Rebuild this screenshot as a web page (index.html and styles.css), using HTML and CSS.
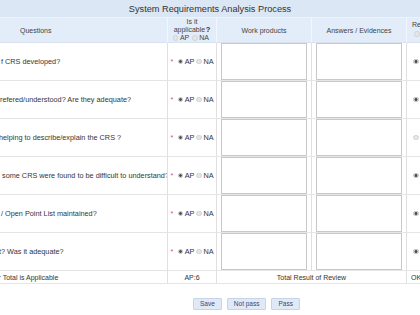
FILE: index.html
```html
<!DOCTYPE html>
<html lang="en">
<head>
<meta charset="utf-8">
<title>System Requirements Analysis Process</title>
<link rel="stylesheet" href="styles.css">
</head>
<body>
<div class="page">
  <div class="title">System Requirements Analysis Process</div>
  <div class="sheet">
    <div class="cell hd hd-q">Questions</div>
    <div class="cell hd hd-app">
      <span>Is it</span>
      <span>applicable<b class="help">?</b></span>
      <span class="opts"><input type="radio" name="all" class="radio"><span class="lbl">AP</span><input type="radio" name="all" class="radio"><span class="lbl">NA</span></span>
    </div>
    <div class="cell hd">Work products</div>
    <div class="cell hd">Answers / Evidences</div>
    <div class="cell hd hd-res"><span>Re</span><input type="radio" name="resall" class="radio"></div>

    <div class="cell q q1">f CRS developed?</div>
    <div class="cell app"><span class="req">*</span><input type="radio" name="a1" class="radio" checked><span class="lbl">AP</span><input type="radio" name="a1" class="radio"><span class="lbl">NA</span></div>
    <div class="cell box"><textarea></textarea></div>
    <div class="cell box"><textarea></textarea></div>
    <div class="cell res"><input type="radio" name="r1" class="radio" checked></div>

    <div class="cell q">refered/understood? Are they adequate?</div>
    <div class="cell app"><span class="req">*</span><input type="radio" name="a2" class="radio" checked><span class="lbl">AP</span><input type="radio" name="a2" class="radio"><span class="lbl">NA</span></div>
    <div class="cell box"><textarea></textarea></div>
    <div class="cell box"><textarea></textarea></div>
    <div class="cell res"><input type="radio" name="r2" class="radio" checked></div>

    <div class="cell q q3">helping to describe/explain the CRS ?</div>
    <div class="cell app"><span class="req">*</span><input type="radio" name="a3" class="radio" checked><span class="lbl">AP</span><input type="radio" name="a3" class="radio"><span class="lbl">NA</span></div>
    <div class="cell box"><textarea></textarea></div>
    <div class="cell box"><textarea></textarea></div>
    <div class="cell res"><input type="radio" name="r3" class="radio"></div>

    <div class="cell q q4">some CRS were found to be difficult to understand?</div>
    <div class="cell app"><span class="req">*</span><input type="radio" name="a4" class="radio" checked><span class="lbl">AP</span><input type="radio" name="a4" class="radio"><span class="lbl">NA</span></div>
    <div class="cell box"><textarea></textarea></div>
    <div class="cell box"><textarea></textarea></div>
    <div class="cell res"><input type="radio" name="r4" class="radio" checked></div>

    <div class="cell q q1">/ Open Point List maintained?</div>
    <div class="cell app"><span class="req">*</span><input type="radio" name="a5" class="radio" checked><span class="lbl">AP</span><input type="radio" name="a5" class="radio"><span class="lbl">NA</span></div>
    <div class="cell box"><textarea></textarea></div>
    <div class="cell box"><textarea></textarea></div>
    <div class="cell res"><input type="radio" name="r5" class="radio" checked></div>

    <div class="cell q q6">t? Was it adequate?</div>
    <div class="cell app"><span class="req">*</span><input type="radio" name="a6" class="radio" checked><span class="lbl">AP</span><input type="radio" name="a6" class="radio"><span class="lbl">NA</span></div>
    <div class="cell box"><textarea></textarea></div>
    <div class="cell box"><textarea></textarea></div>
    <div class="cell res"><input type="radio" name="r6" class="radio" checked></div>

    <div class="cell tot tot-q">r Total is Applicable</div>
    <div class="cell tot tot-c">AP:6</div>
    <div class="cell tot tot-c tot-span">Total Result of Review</div>
    <div class="cell tot tot-r">OK</div>
  </div>
  <div class="actions">
    <button class="btn">Save</button>
    <button class="btn">Not pass</button>
    <button class="btn">Pass</button>
  </div>
</div>
</body>
</html>
```

FILE: styles.css
```css
html, body {
  margin: 0;
  padding: 0;
  overflow: hidden;
  background: #fff;
}

body {
  width: 420px;
  height: 315px;
  font-family: "Liberation Sans", Arial, sans-serif;
  color: #333;
}

.page {
  width: 420px;
  overflow: hidden;
}

.title {
  height: 17px;
  line-height: 19px;
  font-size: 9.2px;
  text-align: center;
  background: #dbe7f5;
  border-bottom: 1px solid #eef3fa;
  color: #333;
  white-space: nowrap;
}

.sheet {
  display: grid;
  grid-template-columns: 168px 49px 95px 95px 60px;
  grid-template-rows: 25px repeat(6, 38px) 13px;
  width: 467px;
}

.cell {
  box-sizing: border-box;
  border-right: 1px solid #e0e0e0;
  border-bottom: 1px solid #e6e6e6;
  white-space: nowrap;
  overflow: hidden;
}

/* header */
.hd {
  background: #e2edf9;
  border-right-color: #f3f7fc;
  border-bottom-color: #d9e3ef;
  font-size: 7px;
  color: #444;
  display: flex;
  align-items: center;
  justify-content: center;
}

.hd-q {
  justify-content: flex-start;
  padding-left: 20px;
}

.hd-app {
  flex-direction: column;
  justify-content: flex-start;
  line-height: 8px;
}

.help {
  color: #1d2a44;
  font-weight: bold;
  font-size: 7.5px;
  margin-left: 0.5px;
}

.opts {
  display: flex;
  align-items: center;
  margin-left: 1px;
}

.hd-res {
  flex-direction: column;
  align-items: flex-start;
  justify-content: flex-start;
  padding: 3px 0 0 5px;
  line-height: 8px;
}

.hd-res .radio {
  margin: 2px 0 0 2px;
}

/* radios */
.radio {
  -webkit-appearance: none;
  appearance: none;
  box-sizing: border-box;
  width: 5.5px;
  height: 5.5px;
  margin: 0;
  border-radius: 50%;
  border: 1px solid #d2d2d2;
  background: #e6e6e6;
  flex: none;
}

.radio:checked {
  border-color: #bdbdbd;
  background: radial-gradient(circle, #555 0 1.2px, #d8d8d8 1.7px);
}

.lbl {
  margin-left: 1.5px;
  margin-right: 2px;
}

.opts .lbl {
  margin-left: 1.5px;
  margin-right: 3px;
}

/* body rows */
.q {
  display: flex;
  align-items: center;
  font-size: 7.3px;
  color: #363636;
  border-bottom: 1px solid #e4e4e4;
}

.q1 { padding-left: 1px; }
.q3 { text-indent: -1px; }
.q4 { padding-left: 2px; }
.q6 { text-indent: -1px; }

.app {
  display: flex;
  align-items: center;
  padding-left: 2.5px;
  font-size: 7.3px;
  color: #333;
}

.req {
  color: #e2457a;
  font-size: 7px;
  margin-right: 4.5px;
}

.box {
  padding: 0 4px 0 4px;
}

.box textarea {
  display: block;
  box-sizing: border-box;
  width: 86px;
  height: 37px;
  margin: 0;
  padding: 0;
  border: 1px solid #c8c8c8;
  background: #fff;
  resize: none;
}

.res {
  display: flex;
  align-items: center;
  padding-left: 6px;
}

/* total row */
.tot {
  display: flex;
  align-items: center;
  font-size: 7px;
  color: #333;
  border-bottom: 1px solid #e6e6e6;
}

.tot-q {
  text-indent: -1.5px;
}

.tot-c {
  justify-content: center;
}

.tot-span {
  grid-column: span 2;
}

.tot-r {
  padding-left: 4px;
}

/* actions */
.actions {
  display: flex;
  gap: 5px;
  margin-top: 14px;
  padding-left: 193px;
}

.btn {
  box-sizing: border-box;
  height: 12px;
  padding: 0 6px;
  margin: 0;
  font-family: "Liberation Sans", Arial, sans-serif;
  font-size: 6.5px;
  line-height: 10px;
  color: #34487a;
  background: #e0eaf7;
  border: 1px solid #c5d4e8;
  border-radius: 1px;
}
```
